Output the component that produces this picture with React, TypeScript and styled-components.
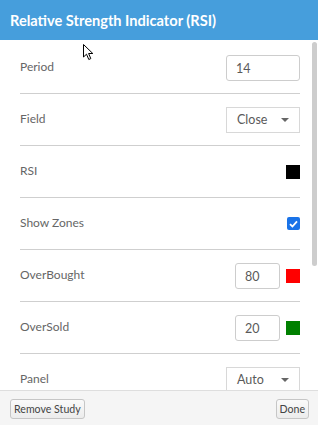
import React from "react";
import styled, { createGlobalStyle } from "styled-components";

const Global = createGlobalStyle`
  html, body { margin: 0; padding: 0; background: #fff; }
  body { font-family: "Lato", "Open Sans", sans-serif; }
  * { box-sizing: border-box; }
`;

const Dialog = styled.div`
  position: relative;
  width: 318px;
  height: 425px;
  display: flex;
  flex-direction: column;
  background: #fff;
  overflow: hidden;
`;

const Header = styled.div`
  height: 40px;
  flex: 0 0 40px;
  background: #469edc;
  color: #fff;
  display: flex;
  align-items: center;
  padding: 0 10px;
  font-family: "Lato", sans-serif;
  font-weight: 700;
  font-size: 14.6px;
`;

const Body = styled.div`
  position: relative;
  flex: 1 1 auto;
  overflow: hidden;
  padding: 2px 18px 0 20px;
`;

const ScrollThumb = styled.div`
  position: absolute;
  top: 42px;
  right: 1px;
  width: 5px;
  height: 224px;
  border-radius: 3px;
  background: #cdcdcd;
`;

const Row = styled.div`
  height: 52px;
  display: flex;
  align-items: center;
  justify-content: space-between;
  border-bottom: 1px solid #cfcfcf;
  color: #666;
  font-size: 12px;
`;

const Label = styled.span`
  margin-top: -2px;
`;

const Controls = styled.div`
  display: flex;
  align-items: center;
  gap: 6px;
`;

const NumInput = styled.div<{ $w: number }>`
  width: ${(p) => p.$w}px;
  height: 26px;
  border: 1px solid #cdcdcd;
  border-radius: 3px;
  padding: 2px 9px 0;
  display: flex;
  align-items: center;
  font-size: 12.5px;
  color: #5a5a5a;
`;

const Select = styled.div`
  width: 74px;
  height: 26px;
  border: 1px solid #d8d8d8;
  display: flex;
  align-items: center;
  justify-content: space-between;
  padding: 0 10px;
  font-size: 12.5px;
  color: #5a5a5a;
`;

const Caret = styled.span`
  width: 0;
  height: 0;
  border-left: 4px solid transparent;
  border-right: 4px solid transparent;
  border-top: 4px solid #666;
`;

const Swatch = styled.div<{ $c: string }>`
  width: 14px;
  height: 14px;
  background: ${(p) => p.$c};
`;

const Check = styled.div`
  width: 13px;
  height: 13px;
  border-radius: 2px;
  background: #1a73e8;
  display: flex;
  align-items: center;
  justify-content: center;
`;

const Footer = styled.div`
  flex: 0 0 35px;
  height: 35px;
  background: #f5f5f5;
  border-top: 1px solid #dedede;
  display: flex;
  align-items: center;
  justify-content: space-between;
  padding: 0 9px 0 10px;
`;

const Button = styled.div`
  height: 20px;
  padding: 0 3px;
  border: 1px solid #c6c6c6;
  border-radius: 3px;
  background: linear-gradient(#fafafa, #ececec);
  font-size: 10.6px;
  color: #444;
  display: flex;
  align-items: center;
  margin-top: 2px;
`;

const Cursor = styled.svg`
  position: absolute;
  left: 83px;
  top: 44px;
  pointer-events: none;
`;

export default function App() {
  return (
    <Dialog>
      <Global />
      <Header>Relative Strength Indicator (RSI)</Header>
      <Body>
        <Row>
          <Label>Period</Label>
          <NumInput $w={74}>14</NumInput>
        </Row>
        <Row>
          <Label>Field</Label>
          <Select>
            Close <Caret />
          </Select>
        </Row>
        <Row>
          <Label>RSI</Label>
          <Swatch $c="#000" />
        </Row>
        <Row>
          <Label>Show Zones</Label>
          <Check>
            <svg width="9" height="8" viewBox="0 0 9 8">
              <path d="M1 4.2 L3.4 6.5 L8 1.3" stroke="#fff" strokeWidth="1.8" fill="none" />
            </svg>
          </Check>
        </Row>
        <Row>
          <Label>OverBought</Label>
          <Controls>
            <NumInput $w={45}>80</NumInput>
            <Swatch $c="#ff0000" />
          </Controls>
        </Row>
        <Row>
          <Label>OverSold</Label>
          <Controls>
            <NumInput $w={45}>20</NumInput>
            <Swatch $c="#008000" />
          </Controls>
        </Row>
        <Row>
          <Label>Panel</Label>
          <Select>
            Auto <Caret />
          </Select>
        </Row>
      </Body>
      <ScrollThumb />
      <Footer>
        <Button>Remove Study</Button>
        <Button>Done</Button>
      </Footer>
      <Cursor width="12" height="18" viewBox="0 0 12 18">
        <path d="M0.5 0.5 L0.5 13 L3.5 10.2 L5.8 15.5 L7.8 14.6 L5.6 9.5 L9.8 9.5 Z" fill="#fff" stroke="#000" strokeWidth="1" strokeLinejoin="round" />
      </Cursor>
    </Dialog>
  );
}
